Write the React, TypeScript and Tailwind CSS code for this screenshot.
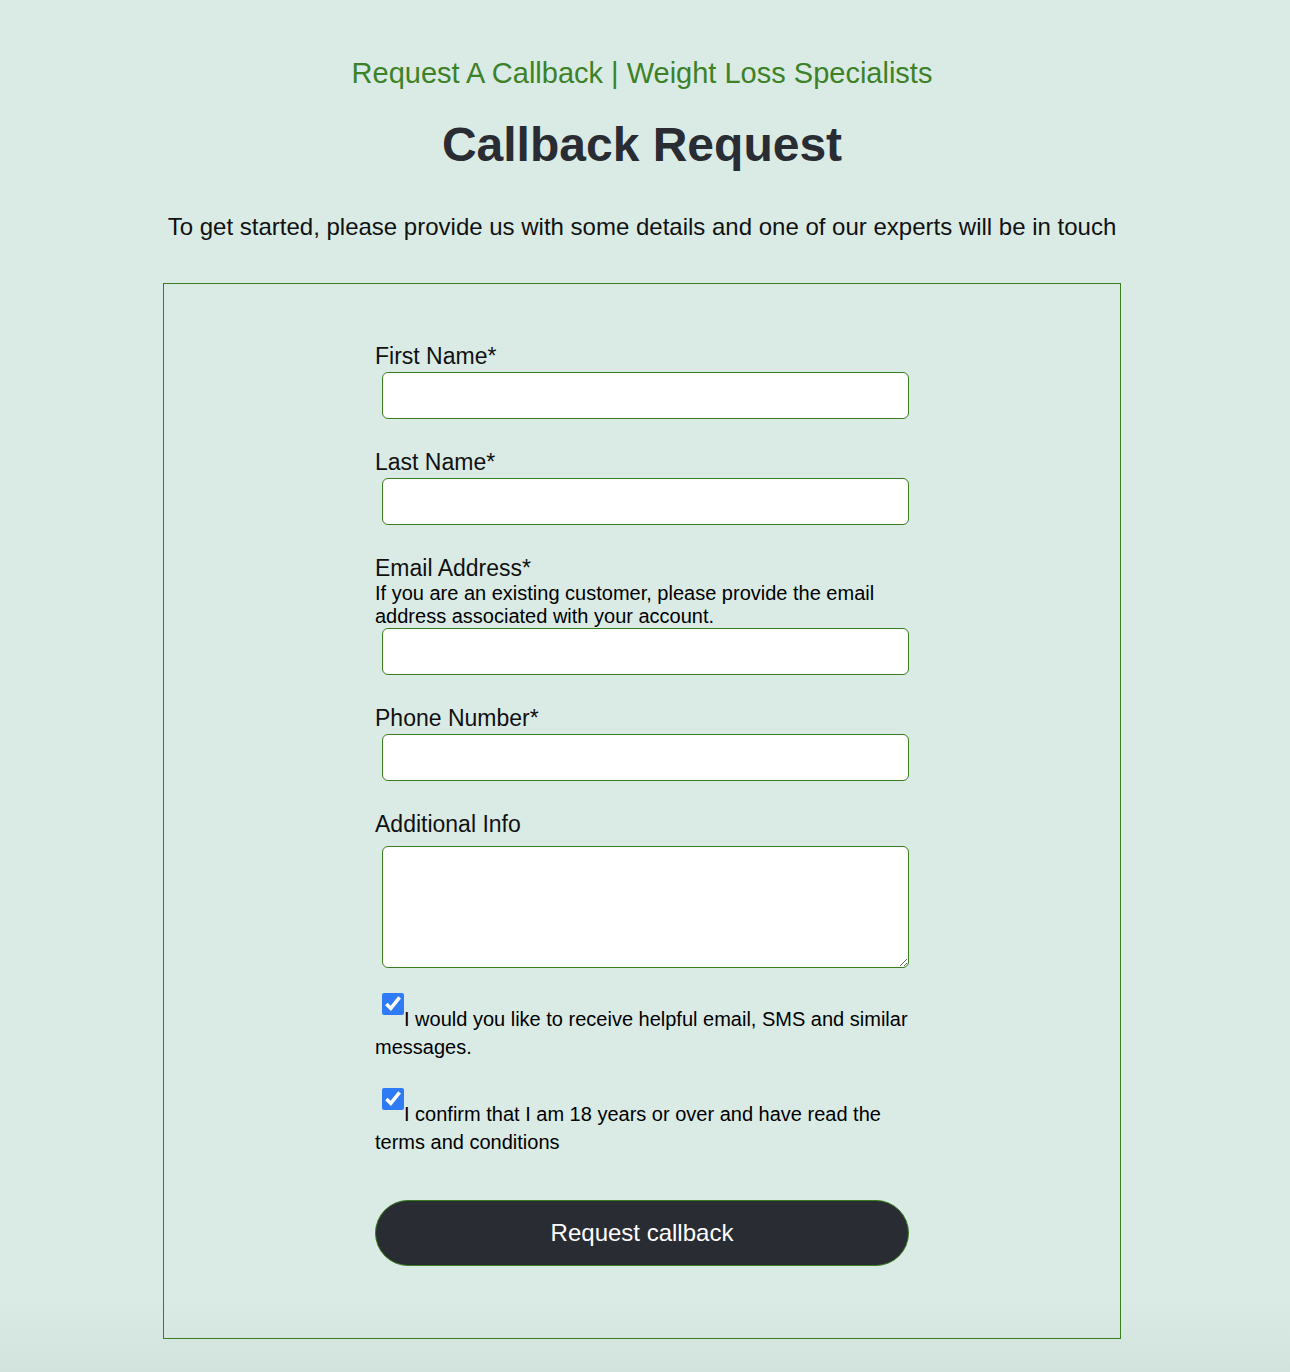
import React from "react";

const font = { fontFamily: '"Liberation Sans", Arial, Helvetica, sans-serif' };

function Field({ label, helper, textarea }: { label: string; helper?: string; textarea?: boolean }) {
  return (
    <div className="mb-[29px]">
      <label className="block text-[23px] leading-[28px] text-[#111]">{label}</label>
      {helper && (
        <p className="text-[20px] leading-[23px] text-black">{helper}</p>
      )}
      {textarea ? (
        <textarea className="ml-[7px] mt-[8px] block h-[122px] w-[527px] rounded-[6px] border border-[#3a7d1f] bg-white" />
      ) : (
        <input
          type="text"
          className={`ml-[7px] block h-[47px] w-[527px] rounded-[6px] border border-[#3a7d1f] bg-white ${helper ? "mt-0" : "mt-[2px]"}`}
        />
      )}
    </div>
  );
}

function Check({ text, className }: { text: string; className?: string }) {
  return (
    <p className={`text-[20px] leading-[28px] text-black ${className ?? ""}`}>
      <input
        type="checkbox"
        defaultChecked
        className="m-0 ml-[7px] h-[22px] w-[22px] accent-[#2f7bf5] align-[11px]"
      />
      {text}
    </p>
  );
}

export default function App() {
  return (
    <div
      style={font}
      className="min-h-[1372px] w-full bg-[linear-gradient(to_bottom,#daebe5_0px,#daebe5_1300px,#d2e2dc_1372px)]"
    >
      <div className="w-[1284px]">
        <div className="flex flex-col items-center pt-[55px]">
          <h2 className="text-[29px] leading-[36px] text-[#3d8228]">
            Request A Callback | Weight Loss Specialists
          </h2>
          <h1 className="mt-[26px] text-[48px] font-bold leading-[56px] text-[#292c33]">
            Callback Request
          </h1>
          <p className="mt-[40px] text-[24px] leading-[28px] text-[#111]">
            To get started, please provide us with some details and one of our experts will be in touch
          </p>
        </div>
        <div className="mx-auto mt-[42px] w-[958px] border border-[#3a7d1f] px-[211px] pb-[72px] pt-[58px]">
          <Field label="First Name*" />
          <Field label="Last Name*" />
          <Field
            label="Email Address*"
            helper="If you are an existing customer, please provide the email address associated with your account."
          />
          <Field label="Phone Number*" />
          <Field label="Additional Info" textarea />
          <Check className="-mt-[4px]" text="I would you like to receive helpful email, SMS and similar messages." />
          <Check className="mt-[27px]" text="I confirm that I am 18 years or over and have read the terms and conditions" />
          <button className="mt-[44px] block h-[66px] w-[534px] rounded-full border border-[#3a7d1f] bg-[#292c33] text-[24px] text-white">
            Request callback
          </button>
        </div>
      </div>
    </div>
  );
}
